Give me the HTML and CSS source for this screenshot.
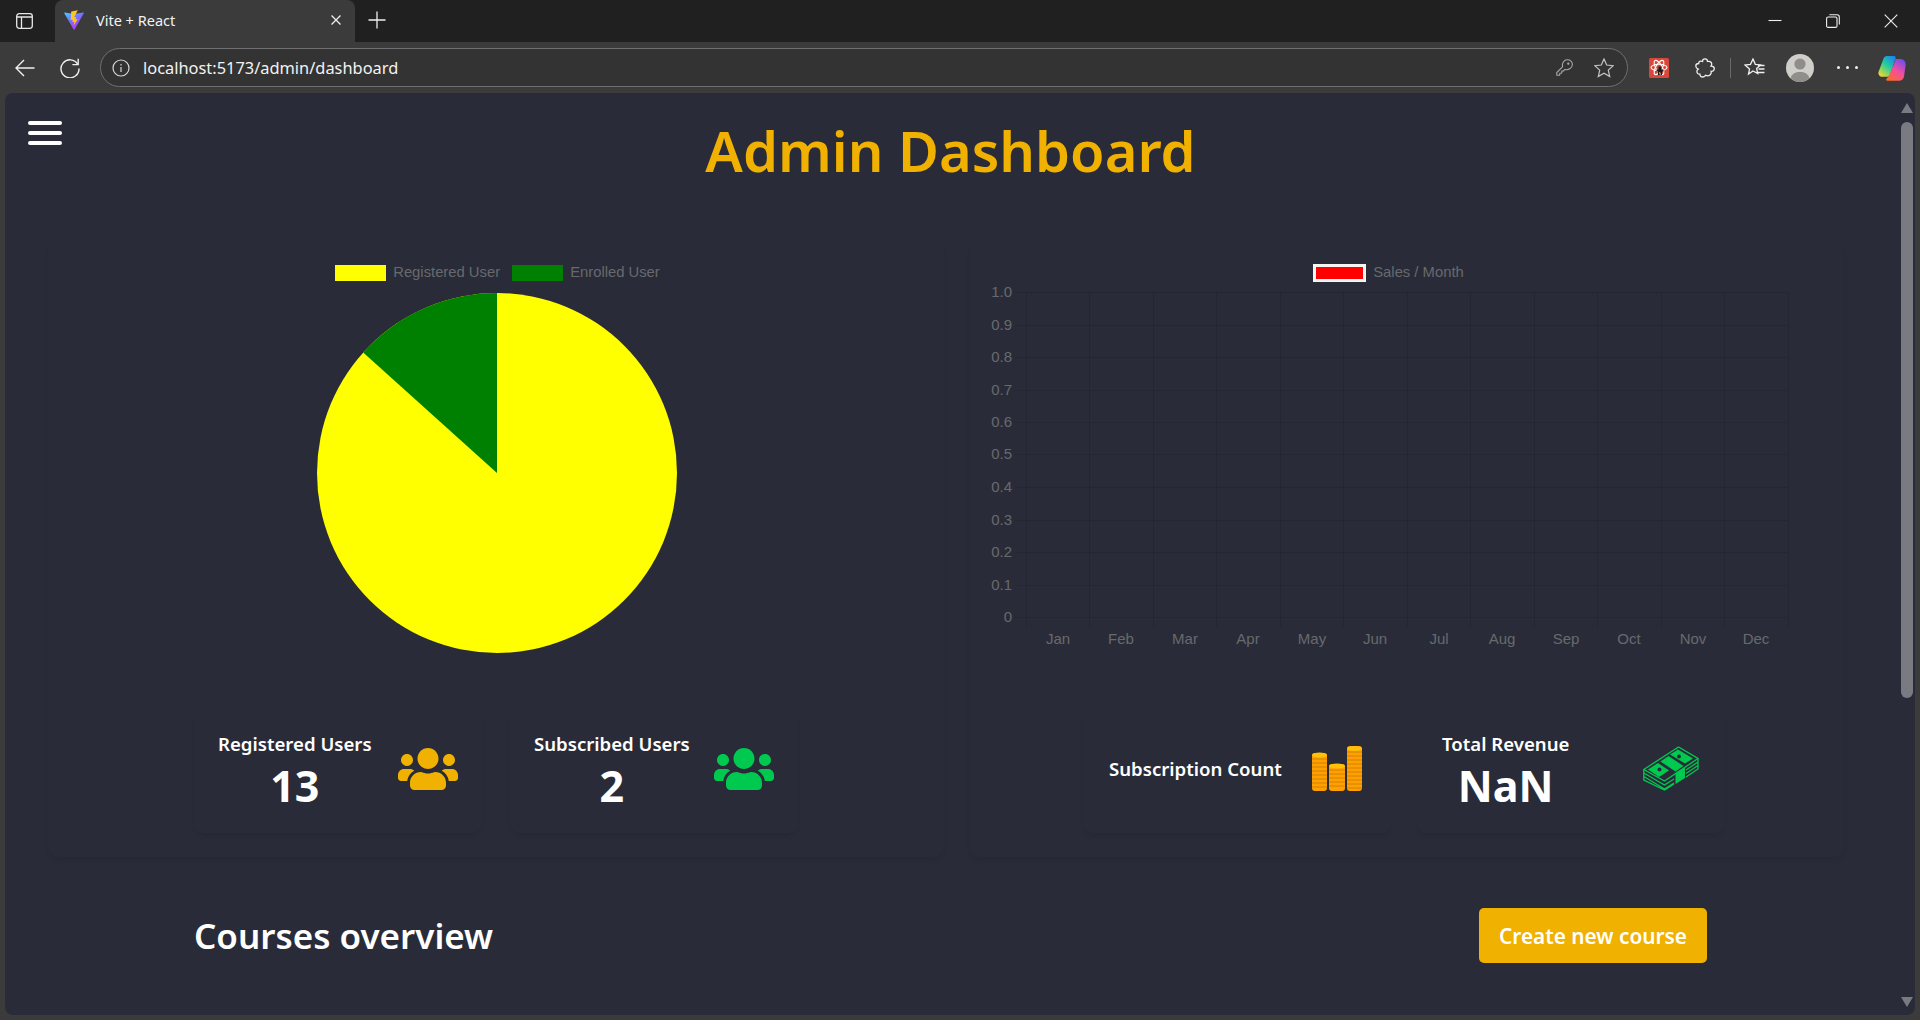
FILE: index.html
```html
<!DOCTYPE html>
<html lang="en">
<head>
    <meta charset="UTF-8">
    <meta name="viewport" content="width=device-width, initial-scale=1.0">
    <title>Vite + React</title>
    <link rel="stylesheet" href="styles.css">
</head>
<body>
    <div class="browser">
        <!-- tab strip -->
        <div class="tab-strip">
            <svg class="panel-icon" width="17" height="16" viewBox="0 0 17 16" fill="none" stroke="#e8e8e8" stroke-width="1.3">
                <rect x="0.7" y="0.7" width="15.6" height="14.6" rx="2.5"/>
                <path d="M0.7 4h15.6M5.5 4v11.3"/>
            </svg>
            <div class="tab">
                <svg class="favicon" width="20" height="20" viewBox="0 0 20 20">
                    <defs>
                        <linearGradient id="viteBody" x1="0" y1="0" x2="0.6" y2="1">
                            <stop offset="0" stop-color="#41d1ff"/>
                            <stop offset="0.5" stop-color="#7b6cff"/>
                            <stop offset="1" stop-color="#bd34fe"/>
                        </linearGradient>
                    </defs>
                    <path d="M0.3 3.2L9.6 19.6c.2.4.7.4.9 0L19.8 3.2c.2-.4-.1-.8-.5-.7L10.2 4.1 .8 2.5c-.4-.1-.7.3-.5.7z" fill="url(#viteBody)"/>
                    <path d="M13.8 0.2L7.2 1.5l-.5 8.6 2.1-.4-.4 2.5 1.9-.4-.6 3.6 4.1-6.3-2.3.4.7-2.6-2.1.4z" fill="#ffc517"/>
                </svg>
                <span class="tab-title">Vite + React</span>
                <svg class="tab-close" width="12" height="12" viewBox="0 0 12 12" stroke="#efefef" stroke-width="1.3">
                    <path d="M1.5 1.5l9 9M10.5 1.5l-9 9"/>
                </svg>
            </div>
            <svg class="new-tab" width="18" height="18" viewBox="0 0 18 18" stroke="#efefef" stroke-width="1.3">
                <path d="M9 0.5v17M0.5 9h17"/>
            </svg>
            <div class="window-controls">
                <svg width="14" height="14" viewBox="0 0 14 14" stroke="#efefef" stroke-width="1.1" fill="none">
                    <path d="M0.5 6.5h13"/>
                </svg>
                <svg width="14" height="14" viewBox="0 0 14 14" stroke="#efefef" stroke-width="1.1" fill="none">
                    <rect x="0.6" y="3" width="10.4" height="10.4" rx="1.5"/>
                    <path d="M3.4 0.7h7.6c1.4 0 2.3.9 2.3 2.3v7.6"/>
                </svg>
                <svg width="14" height="14" viewBox="0 0 14 14" stroke="#efefef" stroke-width="1.1" fill="none">
                    <path d="M0.7 0.7l12.6 12.6M13.3 0.7L0.7 13.3"/>
                </svg>
            </div>
        </div>

        <!-- address bar row -->
        <div class="toolbar">
            <svg class="nav-back" width="20" height="20" viewBox="0 0 20 20" stroke="#f0f0f0" stroke-width="1.4" fill="none">
                <path d="M19.5 10H1M9 2l-8 8 8 8"/>
            </svg>
            <svg class="nav-reload" width="20" height="20" viewBox="0 0 20 20" stroke="#f0f0f0" stroke-width="1.4" fill="none">
                <path d="M17.8 6.3A9 9 0 1 0 19 10.5"/>
                <path d="M18.2 0.8v5.8h-5.8"/>
            </svg>
            <div class="address-bar">
                <svg width="18" height="18" viewBox="0 0 18 18" stroke="#d8d8d8" stroke-width="1.2" fill="none">
                    <circle cx="9" cy="9" r="8"/>
                    <path d="M9 8v5M9 5v1.4"/>
                </svg>
                <span class="url">localhost:5173/admin/dashboard</span>
                <svg class="key-icon" width="17" height="17" viewBox="0 0 17 17" stroke="#a8a8a8" stroke-width="1.1" fill="none">
                    <path d="M6.5 7.8L0.8 13.6v2.6h2.8l.3-1.9 1.8-.3.2-1.9 1.6-.2 1.4-1.5c3 1 7.5-.9 7.5-5.1C16.4 2.8 14.2 .8 11.3 .8 8 .8 5.6 4.4 6.5 7.8z"/>
                    <circle cx="12.3" cy="4.7" r="0.6" fill="#a8a8a8"/>
                </svg>
                <svg class="star-icon" width="20" height="20" viewBox="0 0 20 20" stroke="#c4c4c4" stroke-width="1.2" fill="none">
                    <path d="M10 1l2.7 6 6.5.7-4.9 4.4 1.4 6.4L10 15.2l-5.7 3.3 1.4-6.4L.8 7.7 7.3 7z"/>
                </svg>
            </div>
            <svg class="ext-icon" width="20" height="20" viewBox="0 0 20 20">
                <rect width="20" height="20" rx="1.5" fill="#d9473a"/>
                <g fill="none" stroke="#fff" stroke-width="1.1">
                    <ellipse cx="10" cy="9.5" rx="8" ry="3.2"/>
                    <ellipse cx="10" cy="9.5" rx="8" ry="3.2" transform="rotate(60 10 9.5)"/>
                    <ellipse cx="10" cy="9.5" rx="8" ry="3.2" transform="rotate(120 10 9.5)"/>
                </g>
                <path d="M9.5 8.5h3v3h2v2h-1.5v3.5h-1.5v-3h-1v3h-1.500v-3.5h-1.5v-2h2z" fill="#1c1c1c"/>
            </svg>
            <svg class="puzzle-icon" width="20" height="20" viewBox="0 0 20 20" stroke="#ededed" stroke-width="1.3" fill="none">
                <path d="M7.5 3.5C7.5 1.8 8.8.8 10 .8s2.5 1 2.5 2.7c1.700-.5 4 .2 4.200 2.300.1 1-.2 1.700-.7 2.400 2 0 3.300 1.100 3.300 2.600 0 1.600-1.300 2.700-3.200 2.500.5 2.300-.8 4.400-3.300 4.500-.8 0-1.400-.2-2-.6C10 18 9 19 7.700 19c-1.500 0-2.700-1.200-2.800-2.800-2 .2-3.200-1.300-3-3 .1-1 .7-1.600 1.300-2C1.700 10.500.8 9.300.8 8 .8 6.500 2 5.500 3.700 5.500c-.2-2 1.700-3 3.800-2z"/>
            </svg>
            <div class="toolbar-divider"></div>
            <svg class="fav-icon" width="21" height="20" viewBox="0 0 21 20" stroke="#f0f0f0" stroke-width="1.3" fill="none">
                <path d="M9 1l2.300 5.300 5.200.6-3.900 3.600 1.100 5L9 13l-4.500 3 1-4.900L.9 7l5.600-.7z"/>
                <path d="M14 7.5h6.5M14.5 11h6M14 14.5h6.5"/>
            </svg>
            <svg class="avatar" width="28" height="28" viewBox="0 0 28 28">
                <circle cx="14" cy="14" r="14" fill="#cfcec9"/>
                <circle cx="14" cy="10" r="5.6" fill="#8f8e8a"/>
                <path d="M4.5 24.3C6 19.5 9.5 18 14 18s8 1.500 9.500 6.300A14 14 0 0 1 4.500 24.300z" fill="#8f8e8a"/>
            </svg>
            <div class="more-dots"><span></span><span></span><span></span></div>
            <svg class="copilot" width="28" height="26" viewBox="0 0 28 26">
                <defs>
                    <linearGradient id="copilotLeft" x1="0.8" y1="0" x2="0.1" y2="1">
                        <stop offset="0" stop-color="#1a86f0"/>
                        <stop offset="0.45" stop-color="#22cf9a"/>
                        <stop offset="1" stop-color="#ffd726"/>
                    </linearGradient>
                    <linearGradient id="copilotRight" x1="0.8" y1="0" x2="0.2" y2="1">
                        <stop offset="0" stop-color="#6f4cf0"/>
                        <stop offset="0.5" stop-color="#f04fa0"/>
                        <stop offset="1" stop-color="#ff6a26"/>
                    </linearGradient>
                </defs>
                <path d="M9 1h7c1.200 0 2 1 1.600 2L12 20c-.4 1.200-1.500 1.800-2.800 1.800H4.500C1.500 21.800 0 19.500.5 17L5 5c.8-2.500 2-4 4-4z" fill="url(#copilotLeft)"/>
                <path d="M17 4h5.500c3 0 5.500 2.500 5.200 5.500l-1.700 12c-.3 2.500-2.200 4.300-5 4.300H9.500c-1.300 0-1.700-1-1-2l2-2.300 6.500-15c.3-1 .4-1.800 0-2.500z" fill="url(#copilotRight)"/>
            </svg>
        </div>

        <!-- page -->
        <div class="page-frame">
            <main class="dashboard">
                <button class="menu-button" aria-label="menu"><span></span><span></span><span></span></button>
                <h1 class="page-title">Admin Dashboard</h1>

                <div class="panel-grid">
                    <section class="panel">
                        <div class="legend legend-pie">
                            <span class="legend-box box-yellow"></span><span class="legend-label">Registered User</span>
                            <span class="legend-box box-green"></span><span class="legend-label">Enrolled User</span>
                        </div>
                        <div class="chart-area chart-area-pie">
                            <svg class="pie-chart" width="360" height="360" viewBox="0 0 360 360">
                                <circle cx="180" cy="180" r="180" fill="#ffff00"/>
                                <path d="M180 180V0A180 180 0 0 0 46.200 59.600z" fill="#008000"/>
                            </svg>
                        </div>
                        <div class="stat-row">
                            <div class="stat-card">
                                <div class="stat-text">
                                    <p class="stat-label">Registered Users</p>
                                    <p class="stat-value">13</p>
                                </div>
                                <svg class="stat-icon icon-yellow" width="60" height="48" viewBox="0 0 640 512">
                                    <path d="M96 224c35.300 0 64-28.700 64-64s-28.700-64-64-64-64 28.700-64 64 28.700 64 64 64zm448 0c35.300 0 64-28.700 64-64s-28.700-64-64-64-64 28.700-64 64 28.700 64 64 64zm32 32h-64c-17.600 0-33.500 7.100-45.100 18.600 40.300 22.100 68.900 62 75.100 109.400h66c17.700 0 32-14.300 32-32v-32c0-35.300-28.700-64-64-64zm-256 0c61.900 0 112-50.100 112-112S381.900 32 320 32 208 82.100 208 144s50.100 112 112 112zm76.800 32h-8.300c-20.800 10-43.900 16-68.500 16s-47.600-6-68.500-16h-8.300C179.600 288 128 339.600 128 403.200V432c0 26.500 21.500 48 48 48h288c26.500 0 48-21.500 48-48v-28.800c0-63.600-51.600-115.200-115.200-115.200zm-223.700-13.400C161.500 263.100 145.600 256 128 256H64c-35.300 0-64 28.700-64 64v32c0 17.700 14.300 32 32 32h65.900c6.300-47.400 34.900-87.300 75.200-109.400z"/>
                                </svg>
                            </div>
                            <div class="stat-card">
                                <div class="stat-text">
                                    <p class="stat-label">Subscribed Users</p>
                                    <p class="stat-value">2</p>
                                </div>
                                <svg class="stat-icon icon-green" width="60" height="48" viewBox="0 0 640 512">
                                    <path d="M96 224c35.300 0 64-28.700 64-64s-28.700-64-64-64-64 28.700-64 64 28.700 64 64 64zm448 0c35.300 0 64-28.700 64-64s-28.700-64-64-64-64 28.700-64 64 28.700 64 64 64zm32 32h-64c-17.600 0-33.500 7.100-45.100 18.600 40.300 22.100 68.900 62 75.100 109.400h66c17.700 0 32-14.300 32-32v-32c0-35.300-28.700-64-64-64zm-256 0c61.900 0 112-50.100 112-112S381.900 32 320 32 208 82.100 208 144s50.100 112 112 112zm76.800 32h-8.300c-20.800 10-43.900 16-68.500 16s-47.600-6-68.500-16h-8.300C179.600 288 128 339.600 128 403.200V432c0 26.500 21.500 48 48 48h288c26.500 0 48-21.500 48-48v-28.800c0-63.600-51.600-115.200-115.200-115.200zm-223.700-13.400C161.500 263.100 145.600 256 128 256H64c-35.300 0-64 28.700-64 64v32c0 17.700 14.300 32 32 32h65.900c6.300-47.400 34.900-87.300 75.200-109.400z"/>
                                </svg>
                            </div>
                        </div>
                    </section>

                    <section class="panel">
                        <div class="legend legend-bar">
                            <span class="legend-box box-red"></span><span class="legend-label">Sales / Month</span>
                        </div>
                        <div class="chart-area">
                            <svg class="bar-chart" width="873" height="428" viewBox="0 0 873 428">
                                <path class="grid-lines" d="M45 10.500H818M45 43.500H818M45 75.500H818M45 108.500H818M45 140.500H818M45 172.500H818M45 205.500H818M45 238.500H818M45 270.500H818M45 303.500H818M45 335.500H818M56.500 10V345M119.500 10V345M183.500 10V345M246.500 10V345M310.500 10V345M373.500 10V345M437.500 10V345M500.500 10V345M564.500 10V345M627.500 10V345M691.500 10V345M754.500 10V345M818.500 10V345"/>
                                <g class="tick-y">
                                    <text x="42" y="15">1.0</text>
                                    <text x="42" y="48">0.9</text>
                                    <text x="42" y="80">0.8</text>
                                    <text x="42" y="113">0.7</text>
                                    <text x="42" y="145">0.6</text>
                                    <text x="42" y="177">0.5</text>
                                    <text x="42" y="210">0.4</text>
                                    <text x="42" y="243">0.3</text>
                                    <text x="42" y="275">0.2</text>
                                    <text x="42" y="308">0.1</text>
                                    <text x="42" y="340">0</text>
                                </g>
                                <g class="tick-x">
                                    <text x="88" y="362">Jan</text>
                                    <text x="151" y="362">Feb</text>
                                    <text x="215" y="362">Mar</text>
                                    <text x="278" y="362">Apr</text>
                                    <text x="342" y="362">May</text>
                                    <text x="405" y="362">Jun</text>
                                    <text x="469" y="362">Jul</text>
                                    <text x="532" y="362">Aug</text>
                                    <text x="596" y="362">Sep</text>
                                    <text x="659" y="362">Oct</text>
                                    <text x="723" y="362">Nov</text>
                                    <text x="786" y="362">Dec</text>
                                </g>
                            </svg>
                        </div>
                        <div class="stat-row stat-row-right">
                            <div class="stat-card stat-card-wide">
                                <div class="stat-text stat-text-single">
                                    <p class="stat-label">Subscription Count</p>
                                </div>
                                <svg class="stat-icon" width="50" height="45" viewBox="0 0 50 45">
                                    <g fill="#ffa000">
                                        <rect x="0" y="7" width="15" height="38" rx="3"/>
                                        <rect x="17" y="18" width="16" height="27" rx="3"/>
                                        <rect x="35" y="0" width="15" height="45" rx="3"/>
                                    </g>
                                    <path class="coin-lines" d="M0 13h15M0 17h15M0 21h15M0 25h15M0 29h15M0 33h15M0 37h15M0 41h15M17 24h16M17 28h16M17 32h16M17 36h16M17 40h16M35 6h15M35 10h15M35 14h15M35 18h15M35 22h15M35 26h15M35 30h15M35 34h15M35 38h15M35 42h15"/>
                                    <g fill="#ffc107">
                                        <ellipse cx="7.5" cy="9" rx="7.5" ry="2.5"/>
                                        <ellipse cx="25" cy="20" rx="8" ry="2.5"/>
                                        <ellipse cx="42.5" cy="2.5" rx="7.5" ry="2.5"/>
                                    </g>
                                </svg>
                            </div>
                            <div class="stat-card stat-card-wide">
                                <div class="stat-text">
                                    <p class="stat-label">Total Revenue</p>
                                    <p class="stat-value">NaN</p>
                                </div>
                                <svg class="stat-icon" width="56" height="45" viewBox="8 7 56 45">
                                    <g fill="none" stroke="#00c950" stroke-width="1.3">
                                        <path d="M8.8 30.5L43.5 8 63 19.5 29.5 42z"/>
                                        <path d="M8.8 30.5v3.5L29.500 46l9.500-6M8.800 34v3.500L29.500 50l9.500-6M8.800 37.500V41l20.700 10 9.500-6"/>
                                        <path d="M63 19.500v3.500l-12 8M63 23v3.500l-12 8M63 26.500V30l-12 8"/>
                                    </g>
                                    <g fill="#00c950">
                                        <path d="M25.500 22.500l8-5.500 15 10-8 5.500z"/>
                                        <path d="M40.500 34l9.500-6v11l-9.500 6z"/>
                                        <path d="M13 30.500l10-6.500 11 7.500-10 6.500z"/>
                                        <path d="M35 15.500l8-5 15 9-8 5z"/>
                                    </g>
                                    <circle cx="24.500" cy="30.500" r="2" fill="#292c38"/>
                                    <circle cx="44" cy="17.500" r="2" fill="#292c38"/>
                                </svg>
                            </div>
                        </div>
                    </section>
                </div>

                <div class="courses-header">
                    <h2 class="courses-title">Courses overview</h2>
                    <button class="create-button">Create new course</button>
                </div>
            </main>

            <div class="scrollbar">
                <span class="arrow-up"></span>
                <span class="scroll-thumb"></span>
                <span class="scroll-track"></span>
                <span class="arrow-down"></span>
            </div>
        </div>
    </div>
</body>
</html>
```

FILE: styles.css
```css
* {
    box-sizing: border-box;
}

html,
body {
    height: 100%;
    margin: 0;
    overflow: hidden;
}

body {
    background: #3b3b3b;
    color: #ffffff;
    font-family: "Noto Sans", "Open Sans", sans-serif;
}

svg {
    display: block;
    flex-shrink: 0;
}

p,
h1,
h2 {
    margin: 0;
}

.browser {
    display: flex;
    flex-direction: column;
    height: 100%;
}

/* tab strip */
.tab-strip {
    display: flex;
    align-items: center;
    height: 42px;
    padding-left: 16px;
    background: #202020;
}

.tab {
    display: flex;
    align-items: center;
    align-self: stretch;
    width: 300px;
    margin-left: 22px;
    padding: 0 13px 2px 9px;
    background: #3b3b3b;
    border-radius: 8px 8px 0 0;
}

.favicon {
    margin-right: 12px;
}

.tab-title {
    flex: 1;
    font-size: 14.5px;
    color: #f2f2f2;
}

.new-tab {
    margin: 0 0 2px 13px;
}

.window-controls {
    display: flex;
    align-items: center;
    gap: 44px;
    margin-left: auto;
    padding-right: 22px;
}

/* address bar row */
.toolbar {
    display: flex;
    align-items: center;
    height: 51px;
    padding-left: 15px;
    background: #3b3b3b;
}

.nav-reload {
    margin-left: 25px;
}

.address-bar {
    display: flex;
    align-items: center;
    width: 1528px;
    height: 39px;
    margin-left: 20px;
    padding: 0 13px 0 11px;
    background: #333333;
    border: 1px solid #6f6f6f;
    border-radius: 20px;
}

.url {
    flex: 1;
    margin-left: 13px;
    font-size: 16.4px;
    color: #f2f2f2;
}

.star-icon {
    margin-left: 21px;
}

.ext-icon {
    margin-left: 21px;
}

.puzzle-icon {
    margin-left: 26px;
}

.toolbar-divider {
    width: 1px;
    height: 20px;
    margin-left: 15px;
    background: #6a6a6a;
}

.fav-icon {
    margin-left: 13px;
}

.avatar {
    margin-left: 21px;
}

.more-dots {
    display: flex;
    gap: 6px;
    margin-left: 23px;
}

.more-dots span {
    width: 3px;
    height: 3px;
    background: #efefef;
    border-radius: 50%;
}

.copilot {
    margin-left: 20px;
}

/* page */
.page-frame {
    display: flex;
    flex: 1;
    min-height: 0;
    margin: 0 5px 5px;
    background: #292c38;
    border-radius: 8px;
    overflow: hidden;
}

.dashboard {
    position: relative;
    flex: 1;
    min-width: 0;
}

.menu-button {
    position: absolute;
    top: 28px;
    left: 23px;
    display: flex;
    flex-direction: column;
    gap: 6px;
    width: 34px;
    padding: 0;
    background: none;
    border: none;
}

.menu-button span {
    display: block;
    height: 4px;
    background: #ffffff;
    border-radius: 2px;
}

.page-title {
    padding: 15px 2px 0 0;
    font-size: 56px;
    font-weight: 600;
    line-height: 84px;
    text-align: center;
    color: #f0b100;
}

.panel-grid {
    display: grid;
    grid-template-columns: 894px 873px;
    gap: 27px;
    margin: 48px 0 0 44px;
}

.panel {
    padding-top: 24px;
    padding-bottom: 24px;
    border-radius: 10px;
    box-shadow: 0 4px 6px -2px rgba(0, 0, 0, 0.1);
}

.legend {
    display: flex;
    align-items: center;
    justify-content: center;
    height: 18px;
    font-family: "Liberation Sans", Arial, sans-serif;
    font-size: 14.8px;
    color: #68696d;
}

.legend-pie {
    padding-left: 3px;
}

.legend-bar {
    padding-right: 36px;
}

.legend-label {
    margin-top: -3px;
}

.legend-box {
    width: 51px;
    height: 16px;
    margin-right: 7px;
}

.legend-label + .legend-box {
    margin-left: 12px;
}

.box-yellow {
    background: #ffff00;
}

.box-green {
    background: #008000;
}

.box-red {
    width: 53px;
    height: 18px;
    background: #ff0000;
    border: 3px solid #f5f5f5;
}

.chart-area {
    height: 428px;
}

.chart-area-pie {
    padding-top: 11px;
}

.pie-chart {
    margin-left: 268px;
}

.grid-lines {
    fill: none;
    stroke: rgba(0, 0, 0, 0.1);
    stroke-width: 1;
}

.bar-chart text {
    font-family: "Liberation Sans", Arial, sans-serif;
    font-size: 15px;
    fill: #68696d;
}

.tick-y text {
    text-anchor: end;
}

.tick-x text {
    text-anchor: middle;
}

.stat-row {
    display: flex;
    justify-content: center;
    gap: 28px;
}

.stat-row-right {
    gap: 26px;
    padding-right: 5px;
}

.stat-card {
    display: flex;
    align-items: center;
    justify-content: space-between;
    width: 288px;
    height: 123px;
    padding: 0 24px;
    border-radius: 10px;
    box-shadow: 0 4px 5px -2px rgba(0, 0, 0, 0.1);
}

.stat-card-wide {
    width: 308px;
    padding-left: 26px;
    padding-right: 29px;
}

.stat-card-wide + .stat-card-wide {
    padding-left: 25px;
    padding-right: 26px;
}

.stat-text {
    text-align: center;
}

.stat-text-single {
    margin-bottom: 6px;
}

.stat-label {
    font-size: 18.6px;
    font-weight: 600;
    line-height: 26px;
}

.stat-value {
    margin-top: 3px;
    font-size: 43px;
    font-weight: 700;
    line-height: 52px;
}

.stat-icon {
    margin-bottom: 6px;
}

.icon-yellow {
    fill: #f0b100;
}

.icon-green {
    fill: #00c950;
}

.coin-lines {
    fill: none;
    stroke: #e08a00;
    stroke-width: 1.5;
}

.courses-header {
    display: flex;
    align-items: center;
    justify-content: space-between;
    margin-top: 51px;
    padding: 0 191px 0 189px;
}

.courses-title {
    font-size: 35px;
    font-weight: 600;
}

.create-button {
    width: 228px;
    height: 55px;
    padding: 0;
    background: #f0b100;
    border: none;
    border-radius: 5px;
    color: #ffffff;
    font-family: inherit;
    font-size: 20.8px;
    font-weight: 600;
}

/* scrollbar */
.scrollbar {
    display: flex;
    flex-direction: column;
    align-items: center;
    width: 17px;
    padding: 10px 0 8px;
}

.arrow-up,
.arrow-down {
    width: 0;
    height: 0;
    border-left: 6.5px solid transparent;
    border-right: 6.5px solid transparent;
}

.arrow-up {
    border-bottom: 10px solid #7a7b82;
}

.arrow-down {
    border-top: 10px solid #7a7b82;
}

.scroll-thumb {
    width: 12px;
    height: 576px;
    margin-top: 9px;
    background: #7a7b82;
    border-radius: 6px;
}

.scroll-track {
    flex: 1;
}
```
